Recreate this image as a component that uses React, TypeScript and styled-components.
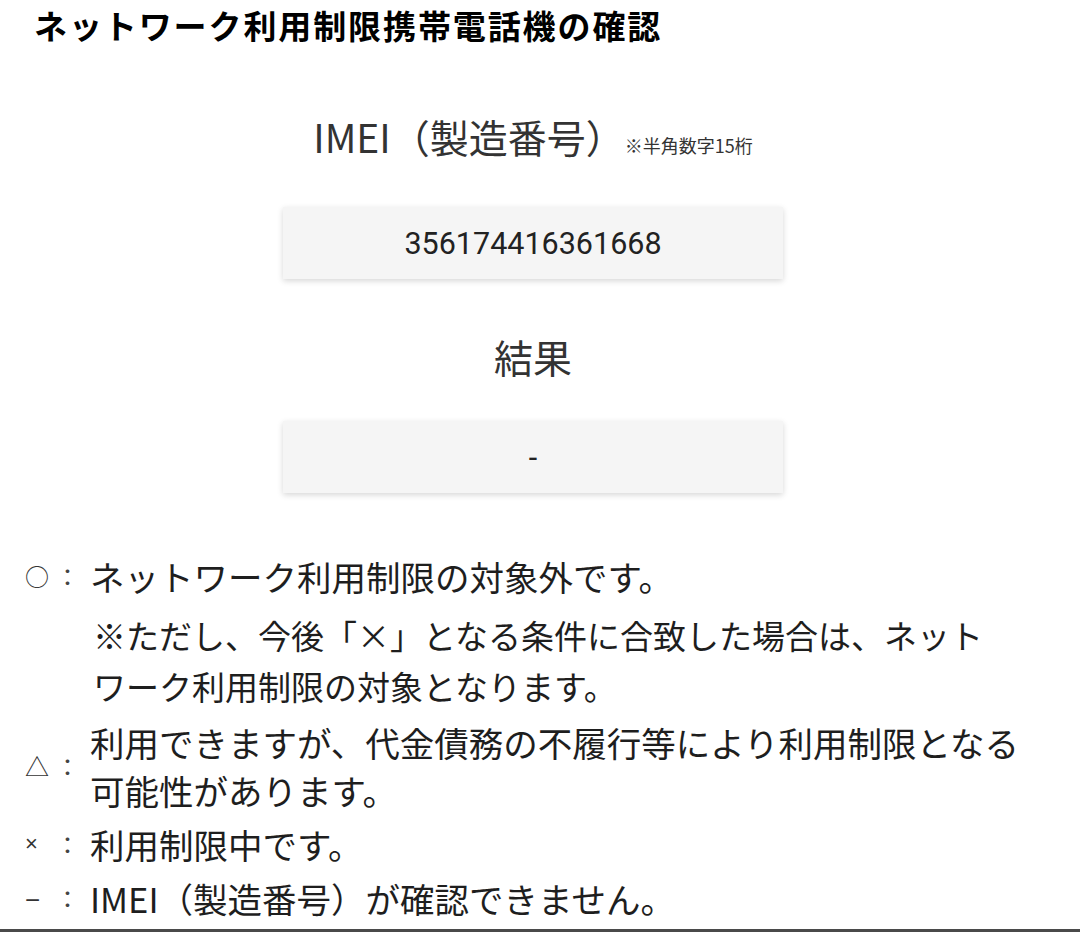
import styled, { createGlobalStyle } from "styled-components"

const GlobalStyle = createGlobalStyle`
    html, body {
        margin: 0;
        padding: 0;
        background: #fff;
    }
    body {
        font-family: "Noto Sans CJK JP", "Noto Sans", sans-serif;
        color: #222;
    }
`

const Page = styled.div`
    width: 1080px;
    display: flex;
    flex-direction: column;
`

const Title = styled.h1`
    margin: 0;
    padding: 3px 0 0 34px;
    font-size: 33px;
    letter-spacing: 1.9px;
    line-height: 44px;
    font-weight: 700;
    color: #000;
    white-space: nowrap;
`

const Checker = styled.section`
    display: flex;
    flex-direction: column;
    align-items: center;
    width: 1066px;
`

const Label = styled.div<{top: number}>`
    display: flex;
    align-items: baseline;
    justify-content: center;
    margin-top: ${props => props.top}px;
    font-size: 39px;
    line-height: 56px;
    color: #333;
    font-weight: 400;
`

const LabelNote = styled.span`
    font-size: 18px;
    color: #333;
`

const ValueBox = styled.div<{top: number}>`
    display: flex;
    align-items: center;
    justify-content: center;
    box-sizing: border-box;
    width: 500px;
    height: 72px;
    margin-top: ${props => props.top}px;
    background: #f5f5f5;
    box-shadow: 0 2px 6px rgba(0,0,0,0.16);
    font-family: Roboto, "Noto Sans", sans-serif;
    font-size: 30.5px;
    color: #222;
`

const Legend = styled.div`
    display: flex;
    flex-direction: column;
    gap: 6px;
    margin-top: 59px;
    padding: 0 40px 0 25px;
`

const LegendRow = styled.div`
    display: grid;
    grid-template-columns: 26px 33px 1fr;
    align-items: center;
`

const Mark = styled.span<{latin?: boolean, size?: number, drop?: number}>`
    font-family: ${props => props.latin ? '"Liberation Sans", sans-serif' : 'inherit'};
    font-size: ${props => props.size ?? 24}px;
    padding-top: ${props => props.drop ?? 0}px;
    line-height: 1;
    color: #333;
`

const Colon = styled.span`
    font-size: 24px;
    line-height: 1;
    text-align: center;
    color: #444;
`

const LegendText = styled.span`
    padding-left: 6px;
    font-size: 34.5px;
    line-height: 48px;
    color: #1e1e1e;
`

const LegendNote = styled.p`
    margin: 10px 0 0;
    padding-left: 68px;
    max-width: 910px;
    font-size: 33px;
    line-height: 51px;
    color: #1e1e1e;
`

const BottomEdge = styled.div`
    height: 3px;
    margin-top: 7px;
    background: #4a4a4a;
`

type Item = { mark: string, latin?: boolean, size?: number, drop?: number, text: string, note?: string }

const legend: Item[] = [
    { mark: "○", text: "ネットワーク利用制限の対象外です。", note: "※ただし、今後「×」となる条件に合致した場合は、ネットワーク利用制限の対象となります。" },
    { mark: "△", text: "利用できますが、代金債務の不履行等により利用制限となる可能性があります。" },
    { mark: "×", latin: true, size: 22, text: "利用制限中です。" },
    { mark: "\u2212", latin: true, size: 26, drop: 4, text: "IMEI（製造番号）が確認できません。" },
]

export default function App() {
    return (
        <>
            <GlobalStyle />
            <Page>
                <Title>ネットワーク利用制限携帯電話機の確認</Title>
                <Checker>
                    <Label top={61}>
                        IMEI（製造番号）<LabelNote>※半角数字15桁</LabelNote>
                    </Label>
                    <ValueBox top={34}>356174416361668</ValueBox>
                    <Label top={49}>結果</Label>
                    <ValueBox top={37}>-</ValueBox>
                </Checker>
                <Legend>
                    {legend.map(item => (
                        <div key={item.mark}>
                            <LegendRow>
                                <Mark latin={item.latin} size={item.size} drop={item.drop}>{item.mark}</Mark>
                                <Colon>：</Colon>
                                <LegendText>{item.text}</LegendText>
                            </LegendRow>
                            {item.note ? <LegendNote>{item.note}</LegendNote> : null}
                        </div>
                    ))}
                </Legend>
                <BottomEdge />
            </Page>
        </>
    )
}
